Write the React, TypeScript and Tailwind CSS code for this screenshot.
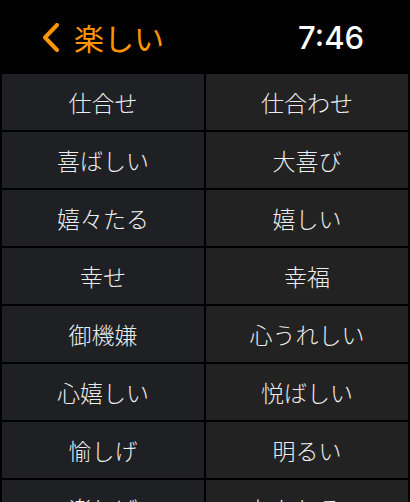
import React from "react";

const rows: [string, string][] = [
  ["仕合せ", "仕合わせ"],
  ["喜ばしい", "大喜び"],
  ["嬉々たる", "嬉しい"],
  ["幸せ", "幸福"],
  ["御機嫌", "心うれしい"],
  ["心嬉しい", "悦ばしい"],
  ["愉しげ", "明るい"],
  ["楽しげ", "おもしろい"],
];

const jp = { fontFamily: '"Noto Sans CJK JP", "Noto Sans", sans-serif' };

export default function App() {
  return (
    <div className="w-[410px] h-[502px] bg-black overflow-hidden" style={jp}>
      <div className="h-[74px] flex items-center pl-[43px] pr-[46px]">
        <svg width="16" height="29" viewBox="0 0 16 29" className="shrink-0">
          <polyline
            points="14,2 2,14.5 14,27"
            fill="none"
            stroke="#ff9500"
            strokeWidth="4"
            strokeLinecap="round"
            strokeLinejoin="round"
          />
        </svg>
        <span className="ml-[15px] text-[30px] leading-none text-[#ff9500]">楽しい</span>
        <span
          className="ml-auto text-[31px] leading-none font-medium text-white"
          style={{ fontFamily: 'Inter, "Liberation Sans", sans-serif' }}
        >
          7:46
        </span>
      </div>
      <div className="grid grid-cols-2 gap-[2px] px-[2px]">
        {rows.map(([a, b], i) => (
          <React.Fragment key={i}>
            <div className="h-[56px] bg-[#1f2024] flex items-center justify-center text-[23px] font-light text-[#ededed]">
              {a}
            </div>
            <div className="h-[56px] bg-[#222222] flex items-center justify-center text-[23px] font-light text-[#ededed]">
              {b}
            </div>
          </React.Fragment>
        ))}
      </div>
    </div>
  );
}
